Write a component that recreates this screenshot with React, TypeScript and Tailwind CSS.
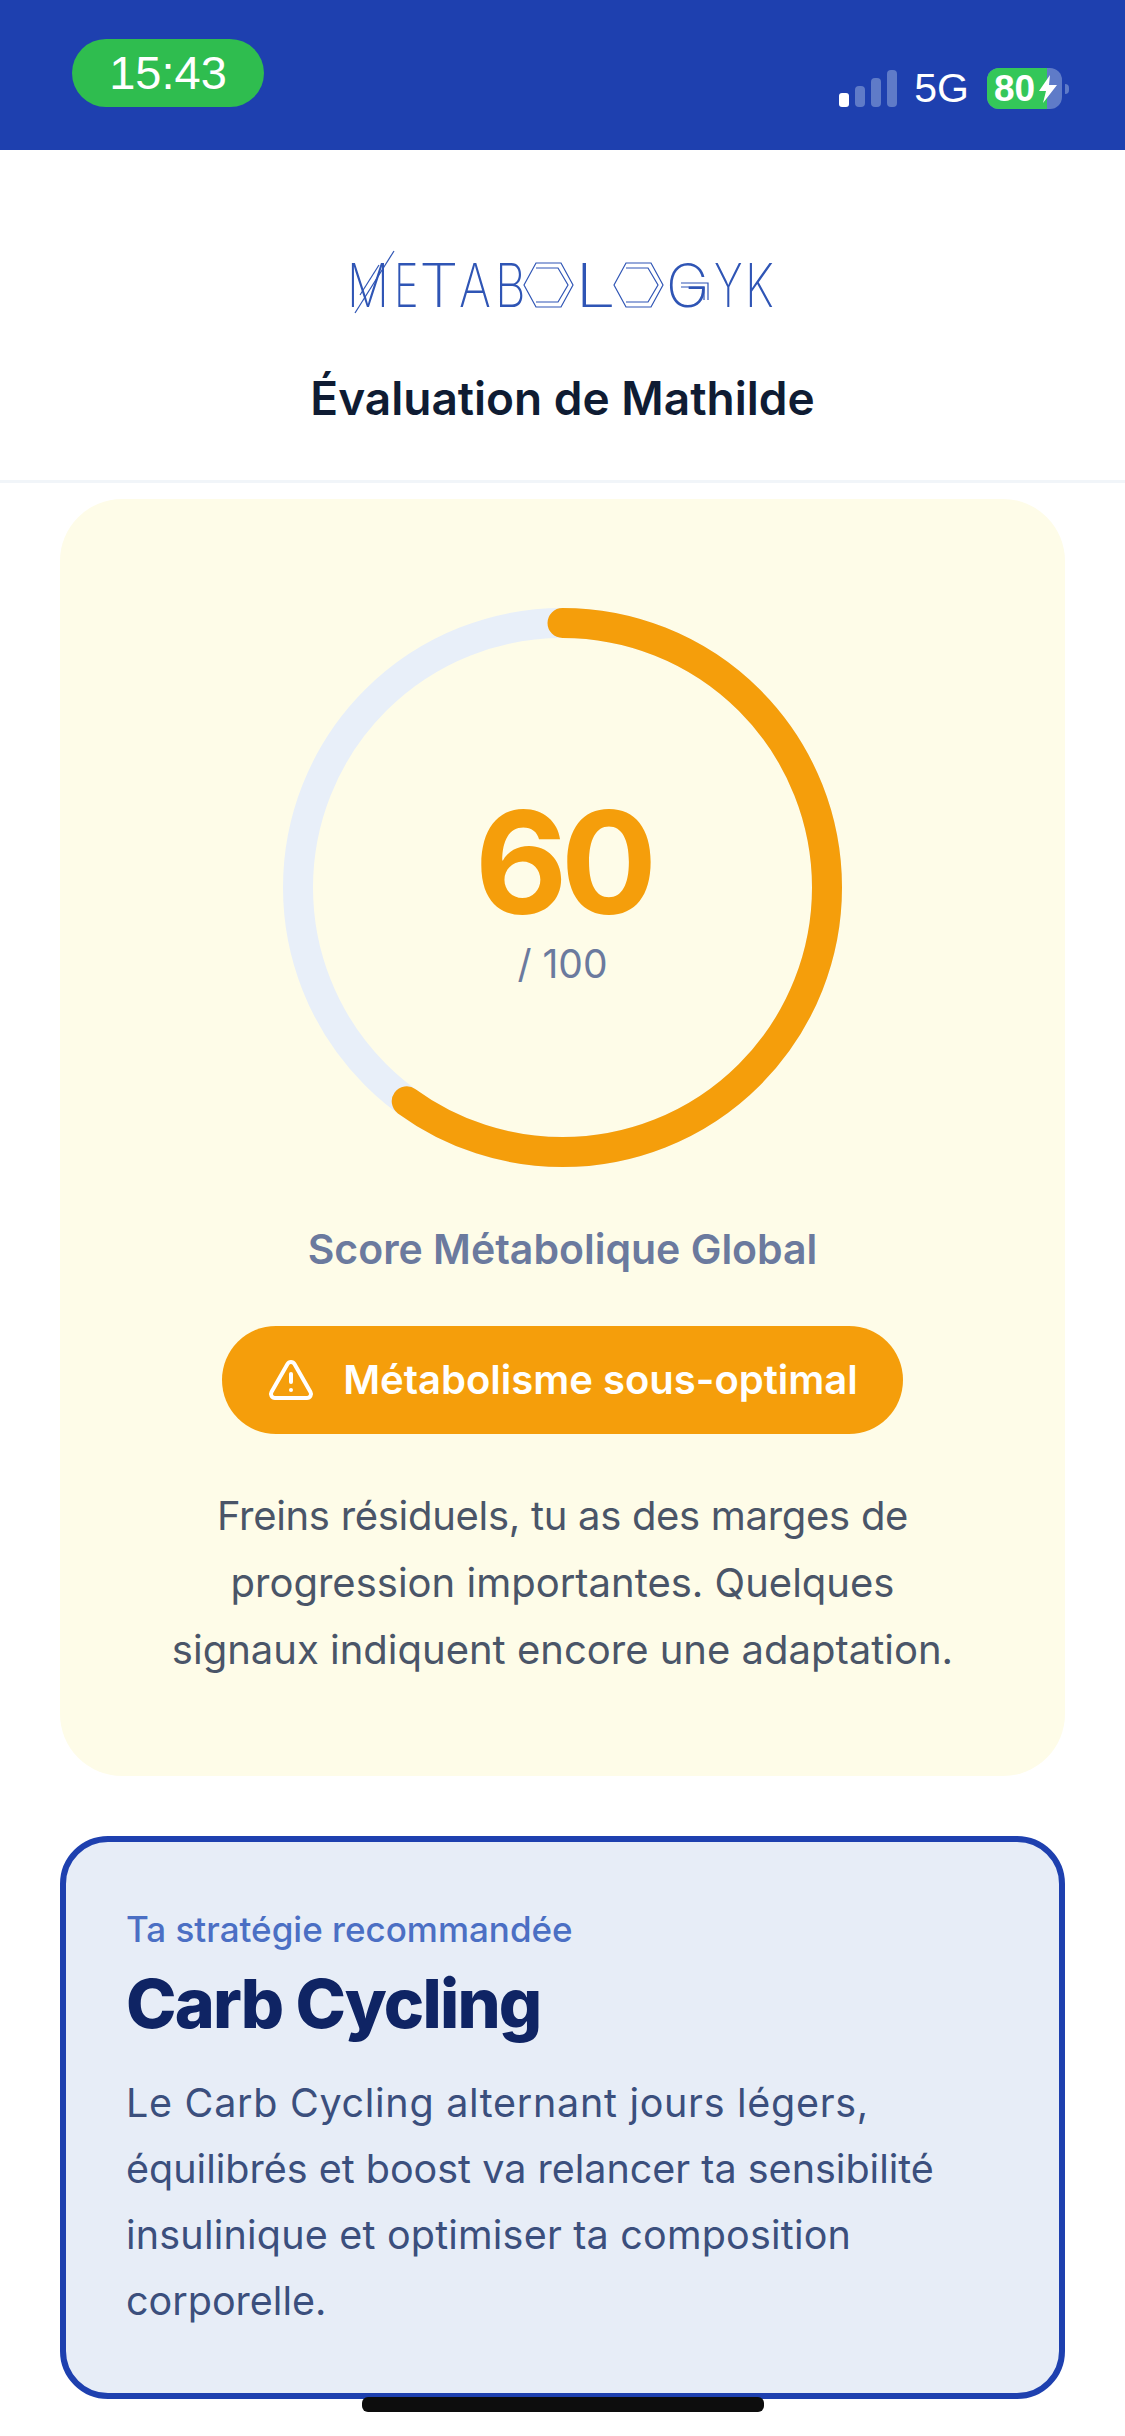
import React from 'react';
import { TriangleAlert } from 'lucide-react';

// letter, left edge, width on the logo, natural advance in em
const LOGO_LETTERS: [string, number, number, number][] = [
    ['M', 4, 42, 0.9],
    ['E', 51, 25, 0.6],
    ['T', 76, 38, 0.6],
    ['A', 116, 33, 0.68],
    ['B', 152, 30, 0.63],
    ['L', 232, 40, 0.55],
    ['G', 323, 43, 0.74],
    ['Y', 371, 28, 0.64],
    ['K', 402, 30, 0.65],
];

const Logo = () => (
    <svg width="440" height="76" viewBox="0 0 440 76" role="img" aria-label="Metabologyk">
        {LOGO_LETTERS.map(([letter, x, width, advance]) => (
            <text key={letter} transform={`translate(${x} 59) scale(${width / (advance * 60)} 1)`} fontSize="60" fontWeight="200" fontFamily="Inter, sans-serif" fill="#2f55b5">
                {letter}
            </text>
        ))}
        <g fill="none" stroke="#2f55b5" strokeWidth="1.2">
            <line x1="51" y1="3" x2="12" y2="65" />
            <line x1="36" y1="17" x2="17" y2="47" />
            <polygon points="181,37 193,15 218,15 230,37 218,59 193,59" />
            <polyline points="193,20 215,20 225,37 215,54 193,54" />
            <polygon points="271,37 283,15 308,15 320,37 308,59 283,59" />
            <polyline points="283,20 305,20 315,37 305,54 283,54" />
            <polyline points="338,35 365,35 365,52" />
            <polyline points="338,39 361,39 361,52" />
        </g>
    </svg>
);

const StatusBar = () => (
    <div className="flex h-[150px] justify-between bg-[#1e40af] font-['Liberation_Sans',sans-serif] text-white">
        <div className="ml-[72px] mt-[39px] flex h-[68px] w-[192px] items-center justify-center rounded-full bg-[#2fbd4f] text-[47px]">
            15:43
        </div>
        <div className="mr-[56px] mt-[68px] flex h-[41px] items-center">
            <div className="flex h-[37px] items-end gap-[6px] self-end mb-[2px]">
                <div className="h-[14px] w-[10px] rounded-[3px] bg-white" />
                <div className="h-[21px] w-[10px] rounded-[4px] bg-[#5f7bc8]" />
                <div className="h-[29px] w-[10px] rounded-[4px] bg-[#5f7bc8]" />
                <div className="h-[37px] w-[10px] rounded-[4px] bg-[#5f7bc8]" />
            </div>
            <div className="ml-[17px] text-[41px] leading-none">5G</div>
            <div className="relative ml-[18px] h-[41px] w-[75px] overflow-hidden rounded-[12px] bg-[#5f7bc8]">
                <div className="h-full w-[60px] bg-[#34c759]" />
                <div className="absolute left-[7px] top-[1px] text-[37px] font-bold leading-[40px]">80</div>
                <svg className="absolute left-[52px] top-[7px]" width="18" height="28" viewBox="0 0 18 28">
                    <polygon points="11,0 0,16 7,16 4,28 18,10 10,10" fill="#fff" />
                </svg>
            </div>
            <div className="ml-[3px] h-[10px] w-[4px] rounded-r-full bg-[#5f7bc8]" />
        </div>
    </div>
);

export default function App() {
    return (
        <div className="relative h-[2436px] w-[1125px] overflow-hidden bg-white font-['Inter',sans-serif]">
            <StatusBar />

            <header className="flex h-[333px] flex-col items-center border-b-[3px] border-[#f1f5f9] pt-[98px]">
                <Logo />
                <h1 className="mt-[44px] text-[46px] font-semibold leading-[60px] text-[#0f1c33]">Évaluation de Mathilde</h1>
            </header>

            <main className="flex flex-col gap-[60px] px-[60px] pt-[16px]">
                <section className="flex h-[1277px] flex-col items-center rounded-[62px] bg-[#fefce8] pt-[109px]">
                    <div className="relative h-[559px] w-[559px]">
                        <svg width="559" height="559" viewBox="0 0 559 559" className="-rotate-90">
                            <circle cx="279.5" cy="279.5" r="264.5" fill="none" stroke="#e8eff9" strokeWidth="30" />
                            <circle cx="279.5" cy="279.5" r="264.5" fill="none" stroke="#f59e0b" strokeWidth="30" strokeLinecap="round" strokeDasharray={`${2 * Math.PI * 264.5 * 0.6} ${2 * Math.PI * 264.5}`} />
                        </svg>
                        <div className="absolute inset-0 flex flex-col items-center pt-[199px]">
                            <div className="text-[143px] font-bold leading-[110px] tracking-[-7px] text-[#f59e0b]">60</div>
                            <div className="mt-[25px] text-[39px] leading-[44px] text-[#6b7a9e]">/ 100</div>
                        </div>
                    </div>
                    <div className="mt-[57px] text-[41px] font-semibold leading-[50px] text-[#6b7a9e]">Score Métabolique Global</div>
                    <div className="mt-[52px] flex h-[108px] w-[681px] items-center justify-center gap-[28px] rounded-full bg-[#f59e0b] text-white">
                        <TriangleAlert size={48} strokeWidth={2} />
                        <span className="text-[40px] font-semibold leading-none">Métabolisme sous-optimal</span>
                    </div>
                    <p className="mt-[48px] text-center text-[40px] leading-[67px] text-[#4a5568]">
                        <span className="tracking-[-0.3px]">Freins résiduels, tu as des marges de</span><br />
                        progression importantes. Quelques<br />
                        signaux indiquent encore une adaptation.
                    </p>
                </section>

                <section className="h-[563px] rounded-[48px] border-[6px] border-[#1e40af] bg-[#e7edf7] pl-[60px] pt-[62px]">
                    <div className="text-[35px] font-medium leading-[50px] text-[#4b6fc4]">Ta stratégie recommandée</div>
                    <h2 className="mt-[4px] text-[68px] font-extrabold leading-[90px] tracking-[-1.8px] text-[#0f2464]">Carb Cycling</h2>
                    <p className="mt-[22px] text-[39.5px] leading-[66px] text-[#3b4f7d]">
                        <span className="tracking-[0.7px]">Le Carb Cycling alternant jours légers,</span><br />
                        équilibrés et boost va relancer ta sensibilité<br />
                        <span className="tracking-[0.2px]">insulinique et optimiser ta composition</span><br />
                        corporelle.
                    </p>
                </section>
            </main>

            <div className="absolute left-[362px] top-[2397px] h-[15px] w-[402px] rounded-[6px] bg-[#0d0d0d]" />
        </div>
    );
}
